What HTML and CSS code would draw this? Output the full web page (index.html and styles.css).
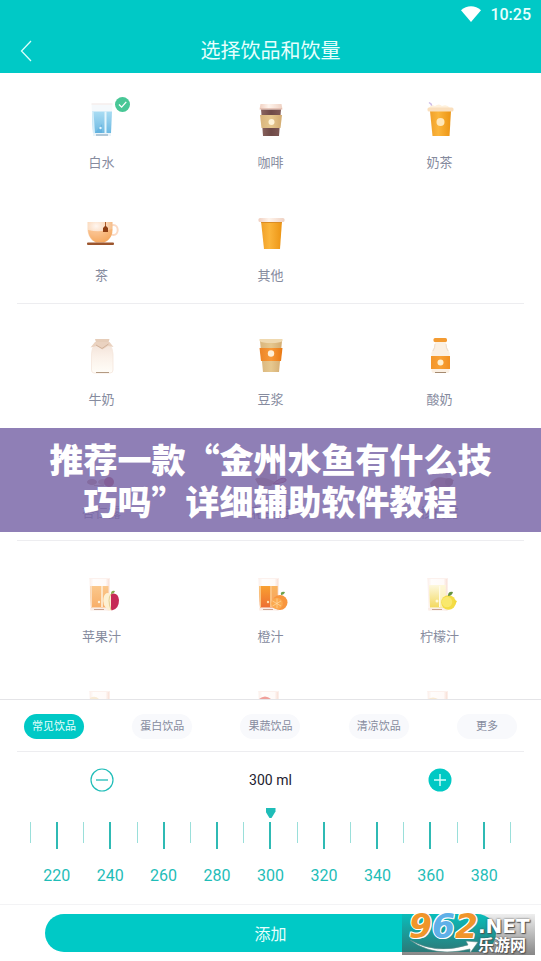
FILE: index.html
```html
<!DOCTYPE html>
<html lang="zh-CN">
<head>
<meta charset="utf-8">
<meta name="viewport" content="width=device-width, initial-scale=1">
<title>选择饮品和饮量</title>
<link rel="stylesheet" href="styles.css">
</head>
<body>
<svg class="defs" width="0" height="0" aria-hidden="true">
  <defs>
    <linearGradient id="water" x1="0" y1="0" x2="0" y2="1"><stop offset="0" stop-color="#a9dcf3"/><stop offset="1" stop-color="#6db9e2"/></linearGradient>
    <linearGradient id="glassWall" x1="0" y1="0" x2="1" y2="0"><stop offset="0" stop-color="#fbeee9"/><stop offset=".2" stop-color="#fffdfc"/><stop offset=".8" stop-color="#fffaf8"/><stop offset="1" stop-color="#f8ddd3"/></linearGradient>
    <linearGradient id="coffee" x1="0" y1="0" x2="1" y2="0"><stop offset="0" stop-color="#8b6560"/><stop offset=".5" stop-color="#6f4a47"/><stop offset="1" stop-color="#805a56"/></linearGradient>
    <linearGradient id="kraft" x1="0" y1="0" x2="1" y2="0"><stop offset="0" stop-color="#d9b57c"/><stop offset=".5" stop-color="#e6c88f"/><stop offset="1" stop-color="#d3ab70"/></linearGradient>
    <linearGradient id="amber" x1="0" y1="0" x2="1" y2="0"><stop offset="0" stop-color="#f0a02a"/><stop offset=".4" stop-color="#fbb53c"/><stop offset="1" stop-color="#ec9413"/></linearGradient>
    <linearGradient id="lid" x1="0" y1="0" x2="1" y2="0"><stop offset="0" stop-color="#f0cfc0"/><stop offset=".4" stop-color="#fff4ec"/><stop offset="1" stop-color="#efd1c2"/></linearGradient>
    <linearGradient id="sleeve" x1="0" y1="0" x2="1" y2="0"><stop offset="0" stop-color="#ec8426"/><stop offset=".5" stop-color="#f89a3a"/><stop offset="1" stop-color="#e97812"/></linearGradient>
    <radialGradient id="tea" cx=".35" cy=".2" r=".9"><stop offset="0" stop-color="#fff6f0"/><stop offset=".45" stop-color="#fbd9bb"/><stop offset="1" stop-color="#f0a052"/></radialGradient>
    <linearGradient id="milk" x1="0" y1="0" x2="0" y2="1"><stop offset="0" stop-color="#f3e3d9"/><stop offset=".45" stop-color="#fbf1e9"/><stop offset="1" stop-color="#fffdf8"/></linearGradient>
    <linearGradient id="appleJuice" x1="0" y1="0" x2="0" y2="1"><stop offset="0" stop-color="#fbc88c"/><stop offset="1" stop-color="#f8ae68"/></linearGradient>
    <linearGradient id="orangeJuice" x1="0" y1="0" x2="0" y2="1"><stop offset="0" stop-color="#f9a030"/><stop offset="1" stop-color="#ed6f33"/></linearGradient>
    <linearGradient id="lemonJuice" x1="0" y1="0" x2="0" y2="1"><stop offset="0" stop-color="#fdf8df"/><stop offset="1" stop-color="#f3d95f"/></linearGradient>
    <symbol id="tumbler" viewBox="0 0 40 40">
      <path d="M7.500 4H27.500V36.500H8.500Z" fill="url(#glassWall)"/>
      <path d="M7.500 4.500H27.500" stroke="#fcf1ed"/>
      <path d="M8 34L8.500 36.500H27.500V34Z" fill="#faeee8"/>
      <path d="M12 35.500H22" stroke="#c9a390"/>
    </symbol>
  </defs>
</svg>

<div class="app">
  <header class="header">
    <div class="status">
      <svg class="wifi" viewBox="0 0 20 16" aria-hidden="true"><path d="M0 4.200C5.800-1 14.200-1 20 4.200L10 16Z" fill="#fff"/></svg>
      <span>10:25</span>
    </div>
    <div class="nav">
      <button class="back" type="button" aria-label="返回"><svg viewBox="0 0 12 22" aria-hidden="true"><path d="M11 1L1.500 11L11 21" fill="none" stroke="#d8fffb" stroke-width="1.300"/></svg></button>
      <h1>选择饮品和饮量</h1>
    </div>
  </header>

  <main class="drinks">
    <section class="group">
      <button class="drink" type="button" aria-pressed="true">
        <span class="art">
          <svg viewBox="0 0 40 40" aria-hidden="true"><path d="M9.500 3.500H30.500L29 36H11Z" fill="#f5f9fc"/><path d="M9.500 4H30.500" stroke="#f7e9e4"/><path d="M10 11.500H30L29 33H11Z" fill="url(#water)"/><path d="M22.500 11.500H24.500V33H22.500Z" fill="#e5f6fd"/><path d="M10 11.500H11.500L13 33H11Z" fill="#d5eefa"/><path d="M13 33L20 24V33Z" fill="#55a9dc" opacity=".5"/><circle cx="18.500" cy="28" r="1.200" fill="#e5f7ff"/><path d="M11 33H29V36H11Z" fill="#eaf4f9"/><path d="M14 35H26" stroke="#789db8"/></svg>
          <svg class="badge" viewBox="0 0 14 14" aria-hidden="true"><circle cx="7" cy="7" r="7" fill="#48c796"/><path d="M3.700 7L6.200 9.500L10.500 4.500" fill="none" stroke="#fff" stroke-width="1.200"/></svg>
        </span>
        <span>白水</span>
      </button>
      <button class="drink" type="button">
        <span class="art"><svg viewBox="0 0 40 40" aria-hidden="true"><path d="M10 9H30L28 36H12Z" fill="url(#coffee)"/><path d="M9.500 4H30.500L31.500 9.500H8.500Z" fill="url(#lid)"/><path d="M9 8.800H31" stroke="#e0b8aa"/><path d="M9 15H31L29.500 28H10.500Z" fill="url(#kraft)"/><circle cx="20.500" cy="22" r="3" fill="#fff4d8"/></svg></span>
        <span>咖啡</span>
      </button>
      <button class="drink" type="button">
        <span class="art"><svg viewBox="0 0 40 40" aria-hidden="true"><path d="M9 2.500L11 4L13 9" fill="none" stroke="#cdbbe6" stroke-width="1.500"/><path d="M10 11H31L29.500 36H12.500Z" fill="url(#amber)"/><path d="M9 8Q11 4 15 6Q19 3 22 6Q27 4 30 8Z" fill="#fff1dc"/><rect x="7.500" y="7.500" width="26" height="4" rx="1.500" fill="#fadfbd"/><circle cx="20.500" cy="22" r="4" fill="#ffe7b9"/></svg></span>
        <span>奶茶</span>
      </button>
      <button class="drink" type="button">
        <span class="art"><svg viewBox="0 0 40 40" aria-hidden="true"><ellipse cx="31.500" cy="17" rx="4.200" ry="5" fill="none" stroke="#fbdac4" stroke-width="2"/><path d="M5.500 9H30.500V17C30.500 24 26 28 22 29.500H14C9 27.500 5.500 22 5.500 16Z" fill="url(#tea)"/><path d="M6 17Q18 20 30.300 16Q30 25 22 29H14Q7 25 6 17Z" fill="#f7a75c" opacity=".55"/><path d="M23.500 9V14" stroke="#a95a2a"/><path d="M21 15L23.500 12.500L26 15V19H21Z" fill="#8e3f14"/><rect x="5" y="29.500" width="27" height="2.500" rx="1" fill="#9c552d"/></svg></span>
        <span>茶</span>
      </button>
      <button class="drink" type="button">
        <span class="art"><svg viewBox="0 0 40 40" aria-hidden="true"><path d="M10 8H31L29 36H13Z" fill="url(#amber)"/><path d="M10.200 9.500H30.800" stroke="#db8d25"/><rect x="7.500" y="5" width="26" height="4" rx="1.500" fill="url(#lid)"/></svg></span>
        <span>其他</span>
      </button>
    </section>

    <section class="group">
      <button class="drink" type="button">
        <span class="art"><svg viewBox="0 0 40 40" aria-hidden="true"><path d="M12.500 7H27.500Q31 12 31 17V33Q31 36 28 36H12Q9.500 36 9.500 33V17Q9.500 12 12.500 7Z" fill="url(#milk)" stroke="#f5e6dc" stroke-width=".8"/><path d="M13 2H27.500L26.500 5.500H14Z" fill="#e6cdb9"/><path d="M13 5H27.500L31.500 10L26 9L20.500 12.500L14.500 9L8.500 10.500Z" fill="#ead2c0"/><path d="M14 8L20 11.500L26.500 7" fill="none" stroke="#d2b39c"/><path d="M14 35.500H27" stroke="#b39a82"/></svg></span>
        <span>牛奶</span>
      </button>
      <button class="drink" type="button">
        <span class="art"><svg viewBox="0 0 40 40" aria-hidden="true"><path d="M9 4H31L28 35H12Z" fill="url(#kraft)"/><path d="M8.500 2H31.500V4Q29 6 20 6T8.500 4Z" fill="#efd9b0"/><path d="M8.500 11H31.500L30 24H10Z" fill="url(#sleeve)"/><circle cx="20" cy="16.500" r="3.200" fill="#fff0d8"/></svg></span>
        <span>豆浆</span>
      </button>
      <button class="drink" type="button">
        <span class="art"><svg viewBox="0 0 40 40" aria-hidden="true"><path d="M15 4H26Q26 10 28.500 13Q30 15 29.500 19V34Q29.500 36 27 36H14Q11.500 36 11.500 34V19Q11 15 12.500 13Q15 10 15 4Z" fill="#fbf0e3"/><path d="M15 7Q15 11 13 14M26 7Q26 11 28 14" fill="none" stroke="#eddccd"/><rect x="13.500" y="1" width="13.500" height="4" rx="1.500" fill="#f39b32"/><path d="M11 19H30V32H11Z" fill="url(#sleeve)"/><path d="M11 19H30V32H11Z" fill="#f9a72f" opacity=".5"/><circle cx="20.500" cy="25.500" r="3" fill="#fff0cf"/><path d="M15 35.500H26" stroke="#a58a70"/></svg></span>
        <span>酸奶</span>
      </button>
      <button class="drink" type="button">
        <span class="art"><svg viewBox="0 0 40 40" aria-hidden="true"><use href="#tumbler"/><ellipse cx="10" cy="32" rx="5" ry="3" fill="#b98774"/><ellipse cx="21" cy="32" rx="5" ry="3" fill="#d7af96"/><circle cx="27" cy="32" r="5" fill="#b33c45"/></svg></span>
        <span>杏仁露</span>
      </button>
      <button class="drink" type="button">
        <span class="art"><svg viewBox="0 0 40 40" aria-hidden="true"><path d="M9 12H26V33H9Z" fill="#ddc2b5"/><path d="M4 29Q10 25 24 32L20 36H8Z" fill="#bc876e"/><path d="M22 34Q30 26 35 29Q37 33 22 34Z" fill="#c88091" stroke="#a5364e"/></svg></span>
        <span>花生露</span>
      </button>
      <button class="drink" type="button">
        <span class="art"><svg viewBox="0 0 40 40" aria-hidden="true"><use href="#tumbler"/><path d="M10 33Q17 25 25 28L34 30L29 38H12Z" fill="#bd8670"/><circle cx="29" cy="32" r="4" fill="#a26b55"/></svg></span>
        <span>核桃露</span>
      </button>
    </section>

    <section class="group">
      <button class="drink" type="button">
        <span class="art"><svg viewBox="0 0 40 40" aria-hidden="true"><use href="#tumbler"/><path d="M8 12H26.500V33.500H9Z" fill="url(#appleJuice)"/><path d="M19 12H21V33H19Z" fill="#fde4c5"/><path d="M8 12H10V33.500H9Z" fill="#fbdcbd"/><circle cx="17" cy="28" r="1.200" fill="#fff1d9"/><path d="M29 20Q23 17 21.500 24Q20 31 26 36Q28 37 30 36Z" fill="#fdf0d2"/><path d="M29 20Q36 18 37 26Q37 34 31 36Q29.500 36.500 29 36Z" fill="#c62b57"/><path d="M29 20Q25 25 29 36" fill="none" stroke="#e4cf90"/><path d="M29 20Q29 16 33 17Q32 20 29 20Z" fill="#88a94c"/></svg></span>
        <span>苹果汁</span>
      </button>
      <button class="drink" type="button">
        <span class="art"><svg viewBox="0 0 40 40" aria-hidden="true"><use href="#tumbler"/><path d="M8 12H26.500V33.500H9Z" fill="url(#orangeJuice)"/><path d="M19 12H21V33H19Z" fill="#fbc180"/><path d="M21 12H26.500V33H21Z" fill="#fac17f" opacity=".6"/><path d="M8 12H10V33.500H9Z" fill="#fbc782"/><circle cx="17" cy="28" r="1.200" fill="#ffe0b0"/><circle cx="29" cy="28.500" r="7.500" fill="#f8953d"/><circle cx="26" cy="29.500" r="5.800" fill="#fba94f"/><path d="M26 24.500V34M21.500 27L30 32M21.500 32L30 27" stroke="#ffdaa0" stroke-width=".7"/><path d="M30 21Q29 17 34 18Q33 21 30 21Z" fill="#6fa04a"/></svg></span>
        <span>橙汁</span>
      </button>
      <button class="drink" type="button">
        <span class="art"><svg viewBox="0 0 40 40" aria-hidden="true"><use href="#tumbler"/><path d="M9 11H25.500V33.500H10Z" fill="url(#lemonJuice)"/><path d="M19 12H20.500V33H19Z" fill="#fffbe8"/><path d="M20.500 11H25.500V33H20.500Z" fill="#fdf6d5" opacity=".7"/><circle cx="17" cy="27" r="1.500" fill="#fff9d8"/><circle cx="28.500" cy="28.500" r="7.300" fill="#f4dc45"/><circle cx="27" cy="28" r="5.200" fill="#f9e86d"/><path d="M34 26L37 27L35 31Z" fill="#f1d83c"/><path d="M28 22Q28 17 33 18Q32 22 28 22Z" fill="#66933f"/></svg></span>
        <span>柠檬汁</span>
      </button>
      <button class="drink" type="button" aria-label="梨汁">
        <span class="art"><svg viewBox="0 0 40 40" aria-hidden="true"><use href="#tumbler"/><path d="M8 11Q13 8 17 12V34H9Z" fill="#f8ebd6"/></svg></span>
      </button>
      <button class="drink" type="button" aria-label="西瓜汁">
        <span class="art"><svg viewBox="0 0 40 40" aria-hidden="true"><use href="#tumbler"/><path d="M8 12Q14 7 20 12V34H9Z" fill="#f0a09b"/></svg></span>
      </button>
      <button class="drink" type="button" aria-label="椰汁">
        <span class="art"><svg viewBox="0 0 40 40" aria-hidden="true"><use href="#tumbler"/><path d="M8 12Q13 9 18 12V34H9Z" fill="#f8e9d2"/></svg></span>
      </button>
    </section>
  </main>

  <div class="panel">
    <nav class="tabs">
      <button class="tab active" type="button">常见饮品</button>
      <button class="tab" type="button">蛋白饮品</button>
      <button class="tab" type="button">果蔬饮品</button>
      <button class="tab" type="button">清凉饮品</button>
      <button class="tab" type="button">更多</button>
    </nav>
    <div class="stepper">
      <button class="step" type="button" aria-label="减少"><svg viewBox="0 0 24 24" aria-hidden="true"><circle cx="12" cy="12" r="11" fill="#fff" stroke="#1fbdb8" stroke-width="1.200"/><path d="M6 12H18" stroke="#1fbdb8" stroke-width="1.300"/></svg></button>
      <output for="amount">300 ml</output>
      <button class="step" type="button" aria-label="增加"><svg viewBox="0 0 24 24" aria-hidden="true"><circle cx="12" cy="12" r="11.500" fill="#00c9c4"/><path d="M6 12H18M12 6V18" stroke="#d5fffc" stroke-width="1.400"/></svg></button>
    </div>
    <div class="ruler">
      <input class="slider" id="amount" type="range" min="210" max="390" step="10" value="300" aria-label="饮量">
      <div class="ticks" aria-hidden="true"><i></i><i></i><i></i><i></i><i></i><i></i><i></i><i></i><i></i><i></i><i></i><i></i><i></i><i></i><i></i><i></i><i></i><i></i><i></i></div>
      <div class="scale"><span>220</span><span>240</span><span>260</span><span>280</span><span>300</span><span>320</span><span>340</span><span>360</span><span>380</span></div>
    </div>
    <footer class="footer">
      <button class="add" type="button">添加</button>
    </footer>
  </div>

  <div class="banner">推荐一款“金州水鱼有什么技<br>巧吗”详细辅助软件教程</div>

  <div class="mark">
    <div class="mark-number"><span>9</span><span class="blue">6</span><span>2</span></div>
    <div class="mark-side"><span class="mark-net">.NET</span><span class="mark-name">乐游网</span></div>
    <svg class="swoosh" viewBox="0 0 68 14" aria-hidden="true"><path d="M0 0Q26 15 58 5L56 1L68 2L60 13V9Q24 18 0 0Z" fill="#fff" stroke="#5f8d8b" stroke-width=".6"/></svg>
  </div>
</div>
</body>
</html>
```
FILE: styles.css
```css
* { box-sizing: border-box; }

:root {
  --teal: #00c9c6;
  --line: #ededf0;
  --muted: #868b9e;
}

body {
  margin: 0;
  background: #fff;
  font-family: Roboto, "Noto Sans CJK SC", sans-serif;
  color: var(--muted);
}

button {
  margin: 0;
  padding: 0;
  border: 0;
  background: none;
  font: inherit;
  color: inherit;
}

svg { display: block; }

.defs { position: absolute; }

.app {
  position: relative;
  display: flex;
  flex-direction: column;
  height: 100vh;
  overflow: hidden;
}

.header {
  flex: none;
  background: var(--teal);
  color: #e6fffd;
}

.status {
  display: flex;
  align-items: center;
  justify-content: flex-end;
  gap: 9px;
  height: 28px;
  padding-right: 10px;
  font-size: 16px;
  font-weight: 500;
}

.wifi { width: 20px; height: 16px; }

.nav {
  display: grid;
  grid-template-columns: 40px 1fr 40px;
  align-items: center;
  height: 45px;
}

.back { justify-self: end; padding-right: 8px; }
.back svg { width: 12px; height: 22px; }

.nav h1 {
  margin: 0;
  font-size: 20px;
  font-weight: 400;
  line-height: 28px;
  text-align: center;
}

.drinks {
  flex: 1;
  min-height: 0;
  overflow: hidden;
  padding: 0 17px;
}

.group {
  display: grid;
  grid-template-columns: repeat(3, 1fr);
  padding-bottom: 4px;
  border-bottom: 1px solid var(--line);
  margin-bottom: 6px;
}

.drink {
  display: flex;
  flex-direction: column;
  align-items: center;
  gap: 13px;
  padding: 27px 0 13px;
  font-size: 13px;
  line-height: 20px;
}

.art { position: relative; }
.art svg { width: 40px; height: 40px; }

.art .badge {
  position: absolute;
  top: -3px;
  right: -8px;
  width: 15px;
  height: 15px;
}

.panel {
  flex: none;
  border-top: 1px solid #e4e4e7;
  background: #fff;
}

.tabs {
  display: grid;
  grid-template-columns: repeat(5, 1fr);
  justify-items: center;
  padding: 14px 0 12px;
}

.tab {
  width: 60px;
  height: 25px;
  border-radius: 13px;
  background: #f8f9fc;
  font-size: 11px;
  line-height: 25px;
}

.tab.active { background: var(--teal); color: #e6fffd; }

.stepper {
  display: grid;
  grid-template-columns: repeat(3, 1fr);
  align-items: center;
  justify-items: center;
  height: 57px;
  margin: 0 17px;
  border-top: 1px solid var(--line);
  color: #1d2230;
  font-size: 14px;
}

.step svg { width: 24px; height: 24px; }

.ruler {
  padding: 0 30px 18px;
  border-bottom: 1px solid #f3f3f5;
  color: #1fbdb8;
}

.slider {
  display: block;
  appearance: none;
  width: calc(100% + 10px);
  height: 10px;
  margin: 0 -5px;
  background: transparent;
}

.slider::-webkit-slider-thumb {
  appearance: none;
  width: 10px;
  height: 10px;
  background: #1fbdb8;
  clip-path: polygon(0 0, 100% 0, 100% 35%, 60% 100%, 40% 100%, 0 35%);
}

.ticks {
  display: flex;
  justify-content: space-between;
  height: 27px;
  margin: 4px 0 17px;
}

.ticks i { width: 2px; height: 27px; background: #2fbab4; }
.ticks i:nth-child(odd) { width: 1px; height: 21px; background: #9adfda; }

.scale {
  display: grid;
  grid-template-columns: repeat(9, 1fr);
  font-size: 16px;
  line-height: 20px;
  text-align: center;
}

.footer { padding: 9px 45px; }

.add {
  display: block;
  width: 100%;
  height: 38px;
  border-radius: 19px;
  background: var(--teal);
  color: #e6fffd;
  font-size: 16px;
}

.banner {
  position: absolute;
  top: 428px;
  left: 0;
  right: 0;
  padding: 10px 0;
  background: rgba(122, 103, 168, .84);
  color: #fff;
  font-family: "Noto Sans CJK SC", sans-serif;
  font-size: 34px;
  font-weight: 900;
  line-height: 42px;
  text-align: center;
}

.mark {
  position: absolute;
  right: 6px;
  bottom: 6px;
  display: flex;
  width: 133px;
  height: 41px;
  padding-left: 7px;
  background: linear-gradient(rgba(90, 90, 90, .1), rgba(70, 70, 70, .65));
  color: #fff;
}

.mark-number {
  color: #f0952a;
  font: italic 700 33px/26px "DejaVu Sans", sans-serif;
  text-shadow: 1px 0 #fff, -1px 0 #fff, 0 1px #fff, 0 -1px #fff, 1px 1px #fff, -1px -1px #fff;
}

.mark-number .blue { color: #5fb0e8; }

.mark-side {
  display: flex;
  flex-direction: column;
  padding-top: 3px;
  white-space: nowrap;
  text-shadow: 0 0 2px #444, 1px 1px 1px #555;
}

.mark-net { font: 700 20px/19px "DejaVu Sans", sans-serif; }
.mark-name { font: 700 16px/17px "Noto Sans CJK SC", sans-serif; }

.swoosh {
  position: absolute;
  left: 8px;
  bottom: 1px;
  width: 68px;
  height: 14px;
}
```
